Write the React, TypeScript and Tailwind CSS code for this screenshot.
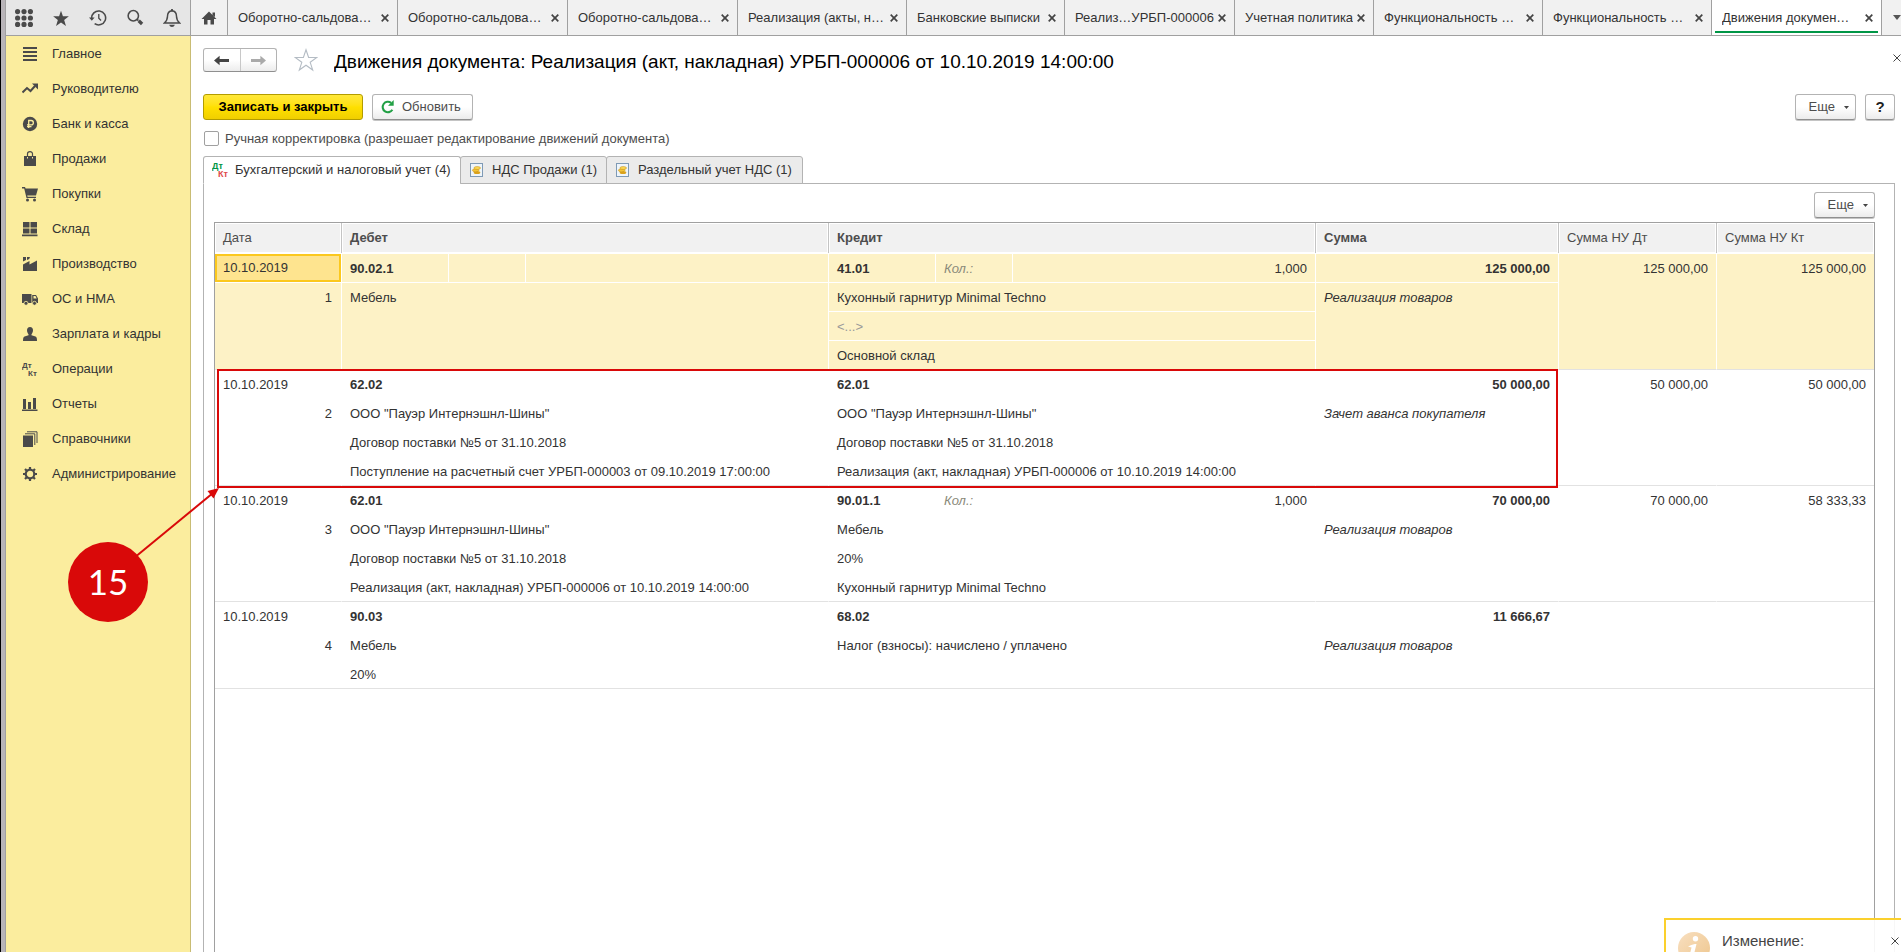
import { useState } from 'react';
import type { ReactNode } from 'react';
import clsx from 'clsx';

function Icon({ children, className = 'size-4' }: { children: ReactNode; className?: string }) {
  return (
    <svg viewBox="0 0 16 16" className={clsx('shrink-0', className)} fill="currentColor" aria-hidden="true">
      {children}
    </svg>
  );
}

function CloseIcon() {
  return (
    <svg viewBox="0 0 8 8" className="size-2 shrink-0" fill="none" stroke="currentColor" strokeWidth="1.7" aria-hidden="true">
      <path d="M.7.7l6.6 6.6M7.3.7L.7 7.3" />
    </svg>
  );
}

function ThinClose() {
  return (
    <svg viewBox="0 0 8 8" className="size-2 shrink-0" fill="none" stroke="#444" strokeWidth="1" aria-hidden="true">
      <path d="M.5.5l7 7M7.5.5l-7 7" />
    </svg>
  );
}

const sections = [
  { label: 'Главное', icon: <path d="M1 1h14v2H1zM1 5h14v2H1zM1 9h14v2H1zM1 13h14v2H1z" /> },
  {
    label: 'Руководителю',
    icon: (
      <>
        <path d="M.5 11.5L5 7l3.5 3L13 5" fill="none" stroke="currentColor" strokeWidth="2" />
        <path d="M10 2.500h6v6z" />
      </>
    ),
  },
  {
    label: 'Банк и касса',
    icon: (
      <>
        <circle cx="8" cy="8" r="7.2" />
        <path d="M6.700 12V4.500h2.500a2.100 2.100 0 0 1 0 4.300H5M5 10.600h4.500" fill="none" stroke="#fbed9e" strokeWidth="1.300" />
      </>
    ),
  },
  {
    label: 'Продажи',
    icon: (
      <>
        <path d="M2 5h3v2.500h1V5h4v2.500h1V5h3v10H2z" />
        <path d="M5.500 6V2.800a2.500 2.200 0 0 1 5 0V6" fill="none" stroke="currentColor" strokeWidth="1.200" />
      </>
    ),
  },
  {
    label: 'Покупки',
    icon: (
      <>
        <path d="M0 1h3l.6 1.500H16l-2 7H5.200l.4 1.300H14V12H4.500L2.200 2.500H0z" />
        <circle cx="5.500" cy="14" r="1.500" />
        <circle cx="12.500" cy="14" r="1.500" />
      </>
    ),
  },
  { label: 'Склад', icon: <path d="M1 1h6.500v5.500H1zM8.500 1H15v5.500H8.500zM1 7.500h6.500v5H1zM8.500 7.500H15v5H8.500zM0 13.500h15.500v1.800H0z" /> },
  { label: 'Производство', icon: <path d="M1 1h3v3L1 5.500zM5 1h3l-.8 2L5 4zM1 8.500L7.500 5v3.500L15 4.500V15H1z" /> },
  {
    label: 'ОС и НМА',
    icon: (
      <>
        <path d="M0 3h9.500v9H0zM10.200 4H14l2 3.500V12h-5.800z" />
        <path d="M11.500 5h2l1.200 2.500h-3.200z" fill="#fbed9e" />
        <circle cx="4" cy="12.300" r="2" stroke="#fbed9e" strokeWidth=".8" />
        <circle cx="12.500" cy="12.300" r="2" stroke="#fbed9e" strokeWidth=".8" />
      </>
    ),
  },
  { label: 'Зарплата и кадры', icon: <path d="M8 1c2 0 3 1.400 3 3.300 0 1.700-.8 3.200-1.500 3.900v1l4 1.300c1 .4 1.500 1.500 1.500 4.500H1c0-3 .5-4.100 1.500-4.500l4-1.300v-1C5.800 7.500 5 6 5 4.300 5 2.400 6 1 8 1z" /> },
  {
    label: 'Операции',
    icon: (
      <g fontFamily="Liberation Sans" fontWeight="700" fontSize="8">
        <text x="0" y="6.500">Дт</text>
        <text x="6" y="15">Кт</text>
      </g>
    ),
  },
  { label: 'Отчеты', icon: <path d="M1 3h3v10H1zM6 6h3v7H6zM11 2h3v11h-3zM0 13.500h15.500V15H0z" /> },
  {
    label: 'Справочники',
    icon: (
      <>
        <path d="M1 4.500h10V16H1z" />
        <path d="M3 2.800h9.800V14M5 .8h10V12" fill="none" stroke="currentColor" strokeWidth="1" />
      </>
    ),
  },
  {
    label: 'Администрирование',
    icon: (
      <>
        <circle cx="8" cy="8" r="4.300" fill="none" stroke="currentColor" strokeWidth="2.200" />
        <path d="M8 1v2.500M8 12.500V15M1 8h2.500M12.500 8H15M3 3l2 2M11 11l2 2M13 3l-2 2M5 11l-2 2" stroke="currentColor" strokeWidth="2.200" />
      </>
    ),
  },
];

const windows = [
  { title: 'Оборотно-сальдова…', width: 'w-[170px]' },
  { title: 'Оборотно-сальдова…', width: 'w-[170px]' },
  { title: 'Оборотно-сальдова…', width: 'w-[170px]' },
  { title: 'Реализация (акты, н…', width: 'w-[169px]' },
  { title: 'Банковские выписки', width: 'w-[158px]' },
  { title: 'Реализ…УРБП-000006', width: 'w-[170px]' },
  { title: 'Учетная политика', width: 'w-[139px]' },
  { title: 'Функциональность …', width: 'w-[169px]' },
  { title: 'Функциональность …', width: 'w-[169px]' },
  { title: 'Движения докумен…', width: 'w-[170px]', active: true },
];

type Side = { account: string; quantity?: string; lines: string[] };

type Entry = {
  debit: Side;
  credit: Side;
  sum: string;
  note: string;
  taxDebit?: string;
  taxCredit?: string;
};

const entries: Entry[] = [
  {
    debit: { account: '90.02.1', lines: ['Мебель'] },
    credit: { account: '41.01', quantity: '1,000', lines: ['Кухонный гарнитур Minimal Techno', '<...>', 'Основной склад'] },
    sum: '125 000,00',
    note: 'Реализация товаров',
    taxDebit: '125 000,00',
    taxCredit: '125 000,00',
  },
  {
    debit: {
      account: '62.02',
      lines: ['ООО "Пауэр Интернэшнл-Шины"', 'Договор поставки №5 от 31.10.2018', 'Поступление на расчетный счет УРБП-000003 от 09.10.2019 17:00:00'],
    },
    credit: {
      account: '62.01',
      lines: ['ООО "Пауэр Интернэшнл-Шины"', 'Договор поставки №5 от 31.10.2018', 'Реализация (акт, накладная) УРБП-000006 от 10.10.2019 14:00:00'],
    },
    sum: '50 000,00',
    note: 'Зачет аванса покупателя',
    taxDebit: '50 000,00',
    taxCredit: '50 000,00',
  },
  {
    debit: {
      account: '62.01',
      lines: ['ООО "Пауэр Интернэшнл-Шины"', 'Договор поставки №5 от 31.10.2018', 'Реализация (акт, накладная) УРБП-000006 от 10.10.2019 14:00:00'],
    },
    credit: { account: '90.01.1', quantity: '1,000', lines: ['Мебель', '20%', 'Кухонный гарнитур Minimal Techno'] },
    sum: '70 000,00',
    note: 'Реализация товаров',
    taxDebit: '70 000,00',
    taxCredit: '58 333,33',
  },
  {
    debit: { account: '90.03', lines: ['Мебель', '20%'] },
    credit: { account: '68.02', lines: ['Налог (взносы): начислено / уплачено'] },
    sum: '11 666,67',
    note: 'Реализация товаров',
  },
];

const columns = [
  { title: 'Дата', width: 'w-[127px]' },
  { title: 'Дебет', bold: true },
  { title: 'Кредит', bold: true },
  { title: 'Сумма', bold: true, width: 'w-[243px]' },
  { title: 'Сумма НУ Дт', width: 'w-[158px]' },
  { title: 'Сумма НУ Кт', width: 'w-[157px]' },
];

const buttonLook = 'flex h-[26px] items-center rounded-[3px] border border-[#b3b3b3] border-b-[#8f8f8f] bg-linear-to-b from-white from-50% to-[#ececec] shadow-[0_1px_0_#c4c4c4]';

function MoreButton() {
  return (
    <button className={clsx(buttonLook, 'w-[61px] justify-end gap-[9px] pr-1.5 text-[#4d4d4d]')}>
      Еще
      <svg viewBox="0 0 5 3" className="h-[3px] w-[5px]" fill="#444" aria-hidden="true">
        <path d="M0 0h5L2.500 3z" />
      </svg>
    </button>
  );
}

function TopBar() {
  return (
    <header className="flex h-9 shrink-0 border-b border-[#a0a0a0] bg-[#f1f1f1] text-[#333]">
      <div className="flex w-[185px] shrink-0 items-center gap-[19px] border-r border-[#a0a0a0] bg-[#e6e6e6] pl-[9px] text-[#4a4a4a]">
        <button aria-label="Меню функций">
          <Icon className="size-[18px]">
            {[2.3, 8, 13.7].map((y) => [2.3, 8, 13.7].map((x) => <circle key={`${x}-${y}`} cx={x} cy={y} r="2.3" />))}
          </Icon>
        </button>
        <button aria-label="Избранное">
          <Icon className="size-[18px]">
            <path d="M8 1.500l1.700 5H15l-4.200 3.200 1.600 5.300L8 11.900 3.600 15l1.600-5.300L1 6.500h5.300z" />
          </Icon>
        </button>
        <button aria-label="История">
          <Icon className="size-[18px]">
            <path d="M2.400 8.500A6.200 6.200 0 1 1 5 13" fill="none" stroke="currentColor" strokeWidth="1.400" />
            <path d="M0 7.500h5L2.500 10.500z" />
            <path d="M8.700 4.500V8.300l2 2" fill="none" stroke="currentColor" strokeWidth="1.200" />
          </Icon>
        </button>
        <button aria-label="Поиск">
          <Icon className="size-[18px]">
            <circle cx="6.500" cy="6" r="4.600" fill="none" stroke="currentColor" strokeWidth="1.400" />
            <path d="M9.700 9l1.300 1.300" stroke="currentColor" strokeWidth="1.400" />
            <path d="M11.300 10.500l3 2.800" stroke="currentColor" strokeWidth="3" />
          </Icon>
        </button>
        <button aria-label="Уведомления">
          <Icon className="size-[18px]">
            <path d="M8 1.500c-3 .3-4 2.500-4 5 0 3-1 4.500-2.800 6h13.600C13 11 12 9.500 12 6.500c0-2.500-1-4.700-4-5z" fill="none" stroke="currentColor" strokeWidth="1.300" />
            <path d="M5.500 14h5c-.5 1.300-1.300 2-2.500 2s-2-.7-2.500-2zM7.200 0h1.600v2H7.200z" />
          </Icon>
        </button>
      </div>
      <button className="flex w-[37px] shrink-0 items-center justify-center border-r border-[#a0a0a0] text-[#4a4a4a]" aria-label="Начальная страница">
        <Icon>
          <path d="M8 1.500L15.500 9H13v5.500H9.500V10h-3v4.500H3V9H.5zM11.500 2.500H14V7l-2.500-2z" />
        </Icon>
      </button>
      {windows.map((win, index) => (
        <div
          key={index}
          className={clsx('flex min-w-0 items-center justify-between border-r border-[#a0a0a0] pr-2 pl-[10px]', win.width, win.active && 'relative bg-white')}
        >
          <button className="truncate">{win.title}</button>
          <button className="text-[#444]" aria-label="Закрыть вкладку">
            <CloseIcon />
          </button>
          {win.active && <span className="absolute inset-x-[3px] bottom-[2px] h-[2px] bg-[#009646]" />}
        </div>
      ))}
      <button className="ml-auto w-[8px] overflow-hidden" aria-label="Список окон">
        <svg viewBox="0 0 8 5" className="h-[5px] w-[8px]" fill="#555" aria-hidden="true">
          <path d="M0 0h8L4 5z" />
        </svg>
      </button>
    </header>
  );
}

function Sidebar() {
  return (
    <nav className="w-[185px] shrink-0 border-r border-[#c9bc74] bg-[#fbed9e]">
      {sections.map((section) => (
        <a key={section.label} href="#" className="flex h-[35px] items-center gap-[14px] pl-4 text-[#333]">
          <span className="text-[#4a4a4a]">
            <Icon>{section.icon}</Icon>
          </span>
          {section.label}
        </a>
      ))}
    </nav>
  );
}

function SideCell({ side, selected }: { side: Side; selected: boolean }) {
  const line = clsx('h-[29px] border-t', selected ? 'border-white' : 'border-transparent');
  const inner = clsx('flex items-center border-r px-2 pt-0.5', selected ? 'border-white' : 'border-transparent');
  return (
    <>
      <div className={clsx(line, 'flex')}>
        <div className={clsx(inner, 'w-[107px] font-bold')}>{side.account}</div>
        <div className={clsx(inner, 'w-[77px] text-[#8a8a7a] italic')}>{side.quantity && 'Кол.:'}</div>
        <div className="flex flex-1 items-center justify-end px-2 pt-0.5">{side.quantity}</div>
      </div>
      {side.lines.map((text, index) => (
        <div key={index} className={clsx(line, 'flex items-center px-2 pt-0.5 whitespace-nowrap', text === '<...>' && 'text-[#999]')}>
          {text}
        </div>
      ))}
    </>
  );
}

function EntryRow({ entry, number, selected }: { entry: Entry; number: number; selected: boolean }) {
  const cell = clsx('border-r p-0 align-top last:border-r-0', selected ? 'border-white bg-[#fdf2c6]' : 'border-r-transparent border-t border-t-[#e2e2e2]');
  const line = clsx('flex h-[29px] items-center border-t', selected ? 'border-white' : 'border-transparent');
  // unselected rows draw the separator on the cell, so the first line is pulled up over it
  const body = selected ? '' : '-mt-px';
  return (
    <tr>
      <td className={cell}>
        <div className={clsx(line, body)}>
          <div className={clsx('flex h-full flex-1 items-center', selected ? 'border-2 border-[#fbc81e] bg-[#fee48f] px-[6px]' : 'px-2 pt-0.5')}>10.10.2019</div>
        </div>
        <div className={clsx(line, 'justify-end pt-0.5 pr-[9px]')}>{number}</div>
      </td>
      <td className={cell}>
        <div className={body}>
          <SideCell side={entry.debit} selected={selected} />
        </div>
      </td>
      <td className={cell}>
        <div className={body}>
          <SideCell side={entry.credit} selected={selected} />
        </div>
      </td>
      <td className={cell}>
        <div className={clsx(line, body, 'justify-end px-2 pt-0.5 font-bold')}>{entry.sum}</div>
        <div className={clsx(line, 'px-2 pt-0.5 italic')}>{entry.note}</div>
      </td>
      <td className={cell}>
        <div className={clsx(line, body, 'justify-end px-2 pt-0.5')}>{entry.taxDebit}</div>
      </td>
      <td className={cell}>
        <div className={clsx(line, body, 'justify-end px-2 pt-0.5')}>{entry.taxCredit}</div>
      </td>
    </tr>
  );
}

function Callout() {
  return (
    <svg viewBox="0 0 156 138" className="pointer-events-none absolute top-[114px] -left-[153px] h-[138px] w-[156px]" aria-hidden="true">
      <circle cx="42" cy="97" r="40" fill="#d90909" />
      <path d="M68 73L147 8" stroke="#d90909" strokeWidth="2" />
      <path d="M153 3l-5.500 10.500-6-7.500z" fill="#d90909" />
      <text x="42" y="110" textAnchor="middle" fontFamily="Lato" fontSize="35" fill="#fff">
        15
      </text>
    </svg>
  );
}

function EntriesTable() {
  return (
    <div className="relative min-h-0 flex-1 border-x border-t border-[#a0a0a0]">
      <table className="w-full table-fixed border-separate border-spacing-0 text-[#333]">
        <thead>
          <tr>
            {columns.map((column) => (
              <th key={column.title} className={clsx('h-[30px] border-r border-[#c4c4c4] p-px text-left last:border-r-0', column.width)}>
                <div className={clsx('flex h-7 items-center bg-[#f1f1f1] pl-[7px] text-[#4d4d4d]', column.bold ? 'font-bold' : 'font-normal')}>{column.title}</div>
              </th>
            ))}
          </tr>
        </thead>
        <tbody>
          {entries.map((entry, index) => (
            <EntryRow key={index} entry={entry} number={index + 1} selected={index === 0} />
          ))}
        </tbody>
      </table>
      <div className="border-t border-[#e2e2e2]" />
      <div className="pointer-events-none absolute top-[146px] right-[316px] left-[2px] h-[119px] border-2 border-[#d90909]">
        <Callout />
      </div>
    </div>
  );
}

function CoinsIcon() {
  return (
    <svg viewBox="0 0 13 14" className="h-[14px] w-[13px] shrink-0" aria-hidden="true">
      <rect x=".5" y=".5" width="12" height="13" fill="#eef5fb" stroke="#7f9ab5" />
      <ellipse cx="7" cy="9.500" rx="3.300" ry="1.500" fill="#dba21b" />
      <ellipse cx="5.700" cy="7.300" rx="3.300" ry="1.500" fill="#f3c437" stroke="#c48d12" strokeWidth=".5" />
      <ellipse cx="7.200" cy="5" rx="3.300" ry="1.500" fill="#f9d552" stroke="#c48d12" strokeWidth=".5" />
    </svg>
  );
}

function PostingsIcon() {
  return (
    <svg viewBox="0 0 17 16" className="h-4 w-[17px] shrink-0" fontFamily="Liberation Sans" fontWeight="700" fontSize="9" aria-hidden="true">
      <text x="0" y="7" fill="#009646">Дт</text>
      <text x="6" y="15" fill="#e04a4a">Кт</text>
    </svg>
  );
}

function RegisterTabs() {
  const [active, setActive] = useState(0);
  const tabs = ['Бухгалтерский и налоговый учет (4)', 'НДС Продажи (1)', 'Раздельный учет НДС (1)'];
  const looks = ['w-[258px] gap-[6px] pl-2', 'w-[147px] gap-[9px] pl-[9px]', 'w-[197px] gap-[9px] pl-[9px]'];

  return (
    <div className="mt-[9px] flex" role="tablist">
      {tabs.map((tab, index) => (
        <button
          key={tab}
          role="tab"
          aria-selected={active === index}
          onClick={() => setActive(index)}
          className={clsx(
            'relative -mb-px flex h-7 items-center rounded-t-[3px] border border-[#b3b3b3] whitespace-nowrap text-[#333] not-first:-ml-px',
            looks[index],
            active === index ? 'border-b-white bg-white' : 'bg-[#ebebeb]',
          )}
        >
          {index === 0 ? <PostingsIcon /> : <CoinsIcon />}
          {tab}
        </button>
      ))}
    </div>
  );
}

function Toast() {
  return (
    <div className="absolute right-0 bottom-0 flex h-[34px] w-[237px] items-start overflow-hidden border-t-2 border-l-2 border-[#fbd02d] bg-white/90 pt-3 pl-3">
      <svg viewBox="0 0 32 32" className="size-8 shrink-0" aria-hidden="true">
        <defs>
          <linearGradient id="info" x1="0" y1="0" x2="1" y2="1">
            <stop offset="0" stopColor="#f8dfc0" />
            <stop offset="1" stopColor="#eec68d" />
          </linearGradient>
        </defs>
        <circle cx="16" cy="16" r="16" fill="url(#info)" />
        <circle cx="17.500" cy="6.700" r="2.700" fill="#fff" />
        <path d="M10 14.500c4-2 6.500-2.500 8.500-2.500l-3.500 14h-4l2.500-10.500z" fill="#fff" />
      </svg>
      <p className="ml-3 text-[15px] leading-[18px] text-[#444]">Изменение:</p>
      <button className="mt-[5px] mr-[2px] ml-auto" aria-label="Закрыть уведомление">
        <ThinClose />
      </button>
    </div>
  );
}

export default function App() {
  return (
    <div className="relative flex h-screen overflow-hidden border-l border-black bg-white font-['Liberation_Sans',Arial,sans-serif] text-[13px] leading-4">
      <div className="w-[5px] shrink-0 border-r border-[#a0a0a0] bg-[#b8b4b8]" />
      <div className="flex min-w-0 flex-1 flex-col">
        <TopBar />
        <div className="flex min-h-0 flex-1">
          <Sidebar />
          <main className="flex min-w-0 flex-1 flex-col pr-[6px] pl-3">
            <div className="mt-3 flex h-6 items-center">
              <div className="flex h-6 w-[74px] shrink-0 rounded-[3px] border border-[#b3b3b3] border-b-[#8f8f8f] bg-linear-to-b from-white from-50% to-[#ececec]">
                <button className="flex flex-1 items-center justify-center border-r border-[#c8c8c8] text-[#444]" aria-label="Назад">
                  <Icon className="size-[15px]">
                    <path d="M0 8l6-5v3.500h10v3H6V13z" />
                  </Icon>
                </button>
                <button className="flex flex-1 items-center justify-center text-[#aaa]" aria-label="Вперед">
                  <Icon className="size-[15px]">
                    <path d="M16 8l-6-5v3.500H0v3h10V13z" />
                  </Icon>
                </button>
              </div>
              <button className="ml-[17px]" aria-label="Добавить в избранное">
                <svg viewBox="0 0 24 24" className="size-6" fill="none" stroke="#b4bcc4" strokeWidth="1.100" aria-hidden="true">
                  <path d="M12 1.800l2.600 7.700h8.200l-6.600 4.800 2.500 7.700L12 17.200 5.300 22l2.500-7.700L1.200 9.500h8.200z" />
                </svg>
              </button>
              <h1 className="ml-4 flex-1 self-start truncate text-[19px] leading-7 text-black">Движения документа: Реализация (акт, накладная) УРБП-000006 от 10.10.2019 14:00:00</h1>
              <button className="-mr-[6px] mb-1" aria-label="Закрыть">
                <ThinClose />
              </button>
            </div>

            <div className="mt-[22px] flex">
              <button className="h-[26px] w-[160px] rounded-[3px] border border-[#b39c00] bg-linear-to-b from-[#ffe838] via-[#ffe000] to-[#f0cf00] font-bold text-black">
                Записать и закрыть
              </button>
              <button className={clsx(buttonLook, 'ml-[9px] w-[101px] gap-[7px] pl-2 text-[#4d4d4d]')}>
                <Icon className="size-[14px] text-[#22a045]">
                  <path d="M13 11.200A6 6 0 1 1 11.500 3.200" fill="none" stroke="currentColor" strokeWidth="2.400" />
                  <path d="M14.500 0v6.500H8z" />
                </Icon>
                Обновить
              </button>
              <div className="ml-auto flex gap-[9px]">
                <MoreButton />
                <button className={clsx(buttonLook, 'w-[30px] justify-center text-[15px] font-bold text-[#222]')}>?</button>
              </div>
            </div>

            <label className="mt-[10px] flex h-[17px] items-center gap-[6px] self-start pl-px text-[#4d4d4d]">
              <input type="checkbox" className="size-[15px] appearance-none rounded-[2px] border border-[#a0a0a0] bg-white checked:bg-[#ffe000]" />
              Ручная корректировка (разрешает редактирование движений документа)
            </label>

            <RegisterTabs />
            <section className="flex min-h-0 flex-1 flex-col border-x border-t border-[#b3b3b3] pr-[19px] pl-[10px]">
              <div className="mt-2 mb-1 flex justify-end">
                <MoreButton />
              </div>
              <EntriesTable />
            </section>
          </main>
        </div>
      </div>
      <Toast />
    </div>
  );
}
